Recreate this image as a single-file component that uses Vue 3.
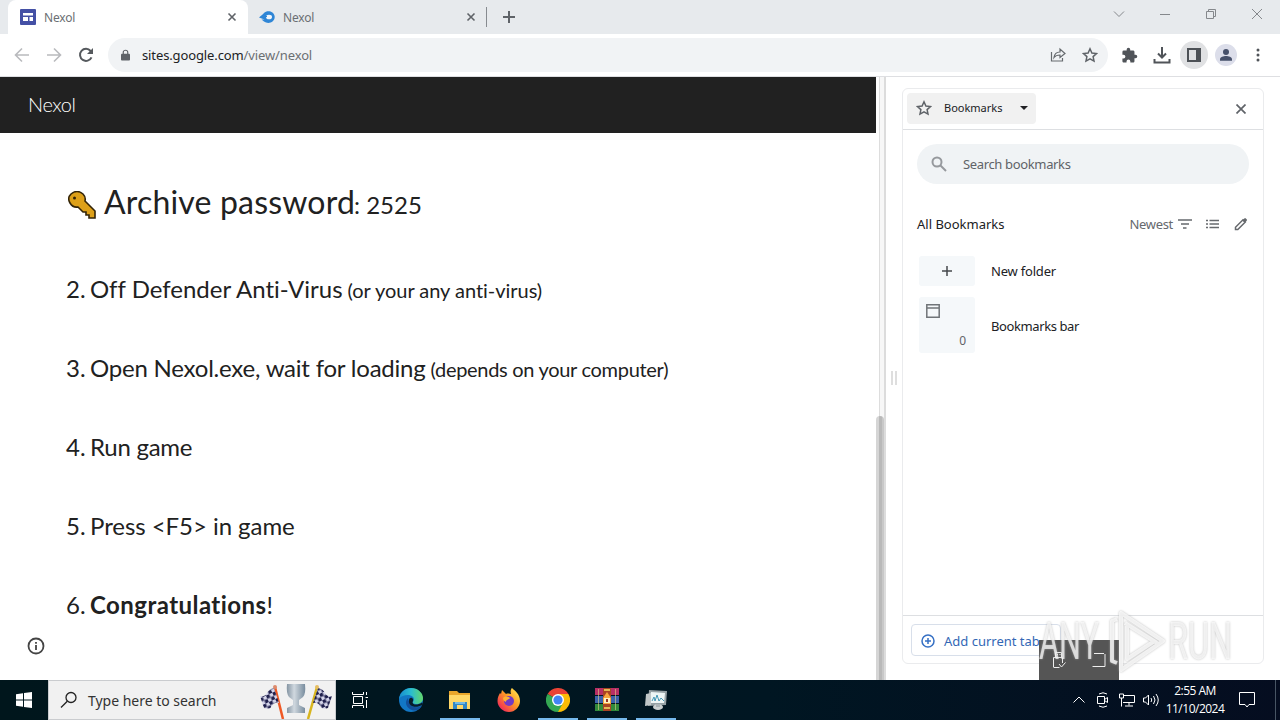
<template>
  <div class="desktop">
    <div class="tab-strip">
      <div class="tab active">
        <svg class="favicon" viewBox="0 0 16 16">
          <rect width="16" height="16" rx="1" fill="#4450a5" />
          <path d="M3 4h10v2.500H3zM3 8h5v4H3zM9.500 8H13v4H9.500z" fill="#fff" />
        </svg>
        <span class="tab-title">Nexol</span>
        <svg class="tab-close" viewBox="0 0 10 10"><path d="M1.500 1.500l7 7M8.500 1.500l-7 7" /></svg>
      </div>
      <div class="tab">
        <svg class="favicon" viewBox="0 0 16 16">
          <path d="M0 8.500C2 6.500 3.500 6 5 4c3-3 10-2 10.700 3.500C16 13.500 9 15.500 5 12.500L2.500 10.500h3L0 8.500z" fill="#2f86d6" />
          <ellipse cx="10" cy="8" rx="3" ry="2.300" fill="#f2f6fa" />
          <path d="M3 7.500h5" stroke="#2f86d6" stroke-width="1.200" />
        </svg>
        <span class="tab-title">Nexol</span>
        <svg class="tab-close" viewBox="0 0 10 10"><path d="M1.500 1.500l7 7M8.500 1.500l-7 7" /></svg>
      </div>
      <span class="tab-divider"></span>
      <svg class="new-tab" viewBox="0 0 12 12"><path d="M6 0v12M0 6h12" /></svg>
      <div class="window-buttons">
        <svg viewBox="0 0 12 12"><path d="M1 3.500l5 5 5-5" /></svg>
        <svg viewBox="0 0 12 12"><path d="M1 6.500h10" /></svg>
        <svg viewBox="0 0 12 12"><path d="M1.500 3.500h7v7h-7zM3.500 3.500v-2h7v7h-2" /></svg>
        <svg viewBox="0 0 12 12"><path d="M1 1l10 10M11 1L1 11" /></svg>
      </div>
    </div>

    <div class="toolbar">
      <div class="nav-buttons">
        <svg class="off" viewBox="0 0 16 16"><path d="M15 8H2M8 1.500L1.500 8 8 14.500" /></svg>
        <svg class="off" viewBox="0 0 16 16"><path d="M1 8h13M8 1.500L14.500 8 8 14.500" /></svg>
        <svg viewBox="0 0 16 16"><path d="M13.500 10.300A6 6 0 1 1 12.600 4L14 5.500" /><path d="M15 1v6H9z" class="solid" /></svg>
      </div>
      <div class="address">
        <svg class="lock" viewBox="0 0 10 12">
          <path d="M1 4.500h8q1 0 1 1V11q0 1-1 1H1q-1 0-1-1V5.500q0-1 1-1z" fill="#5f6368" />
          <path d="M2.500 5V3a2.500 2.300 0 0 1 5 0v2" fill="none" stroke="#5f6368" stroke-width="1.300" />
        </svg>
        <span class="url"><span class="host">sites.google.com</span><span class="path">/view/nexol</span></span>
        <svg class="share" viewBox="0 0 16 16"><path d="M1.500 5v9h11v-3M4 10.500c.5-4 3-5.500 6-5.500V2l5 4.500-5 4V8C7.500 8 5.500 8.500 4 10.500z" /></svg>
        <svg class="star" viewBox="0 0 16 16"><path :d="starPath" /></svg>
      </div>
      <div class="actions">
        <svg viewBox="0 0 24 24" class="puzzle"><path :d="puzzlePath" /></svg>
        <svg viewBox="0 0 18 18" class="line"><path d="M9 1v10M5 7.500L9 11.500l4-4M1.500 13v3.500h15V13" /></svg>
        <span class="round panel-toggle">
          <svg viewBox="0 0 14 14"><path d="M0 0h14v14H0zM2 2v10h7V2z" fill="#4d5156" fill-rule="evenodd" /></svg>
        </span>
        <span class="round profile">
          <svg viewBox="0 0 14 14"><circle cx="7" cy="4" r="3" /><path d="M1 12.800v-1.600C1 9 4.500 8 7 8s6 1 6 3.200v1.600z" /></svg>
        </span>
        <svg viewBox="0 0 4 14" class="kebab"><circle cx="2" cy="2" r="1.500" /><circle cx="2" cy="7" r="1.500" /><circle cx="2" cy="12" r="1.500" /></svg>
      </div>
    </div>

    <div class="browser-body">
      <main class="page">
        <header class="site-header">Nexol</header>
        <div class="site-content">
          <h1>
            <svg class="key" viewBox="0 0 28 28">
              <path d="M3 3q6-5 12 0q3 3 2 7l10 10v7h-6v-3h-3v-3h-3l-5-5Q5 17 2 12Q-1 7 3 3z" />
              <circle cx="6.500" cy="7" r="1.500" class="hole" />
            </svg>
            <span class="label">Archive password</span><span class="code">: 2525</span>
          </h1>
          <p v-for="step in steps" :key="step.number">
            <span class="number">{{ step.number }}.</span>
            <span :class="step.style"><b v-if="step.bold">{{ step.bold }}</b>{{ step.text }}</span>
            <small v-if="step.note" :class="step.style">{{ step.note }}</small>
          </p>
        </div>
        <svg class="info" viewBox="0 0 18 18"><circle cx="9" cy="9" r="7.500" /><path d="M9 8v5M9 5v1.800" /></svg>
      </main>
      <div class="scrollbar"><div class="thumb"></div></div>
      <div class="splitter"><i></i><i></i></div>

      <aside class="side-panel">
        <div class="panel-head">
          <div class="picker">
            <svg class="star" viewBox="0 0 16 16"><path :d="starPath" /></svg>
            <span>Bookmarks</span>
            <i class="caret"></i>
          </div>
          <svg class="panel-close" viewBox="0 0 10 10"><path d="M.5 .5l9 9M9.500 .5l-9 9" /></svg>
        </div>
        <div class="panel-list">
          <div class="search">
            <svg viewBox="0 0 16 16"><circle cx="6" cy="6" r="4.500" /><path d="M9.500 9.500l5.500 5.500" /></svg>
            <span>Search bookmarks</span>
          </div>
          <div class="list-head">
            <span class="all">All Bookmarks</span>
            <span class="newest">Newest</span>
            <svg class="sort" viewBox="0 0 14 12"><path d="M0 2h14M3 6h8M5 10h3.500" /></svg>
            <svg class="rows" viewBox="0 0 14 12"><path d="M0 2.500h2M3.500 2.500H13M0 6h2M3.500 6H13M0 9.500h2M3.500 9.500H13" /></svg>
            <svg class="pencil" viewBox="0 0 14 14"><path d="M1.500 12.500v-2.300L9 2.700l2.300 2.300-7.500 7.500z" /><path d="M8.300 3.400l2-2q.8-.6 1.500 0l.9.900q.6.700 0 1.400l-2 2z" class="solid" /></svg>
          </div>
          <div class="row">
            <div class="tile small"><svg viewBox="0 0 10 10"><path d="M5 0v10M0 5h10" /></svg></div>
            <span class="new-folder">New folder</span>
          </div>
          <div class="row">
            <div class="tile">
              <svg viewBox="0 0 14 14"><path d="M.8 .8h12.400v12.400H.8zM.8 4h12.400" /></svg>
              <span class="count">0</span>
            </div>
            <span class="bar-name">Bookmarks bar</span>
          </div>
        </div>
        <div class="panel-foot">
          <div class="add-tab">
            <svg viewBox="0 0 14 14"><circle cx="7" cy="7" r="6" /><path d="M7 4v6M4 7h6" /></svg>
            <span>Add current tab</span>
          </div>
        </div>
      </aside>

      <div class="tray-popup">
        <svg class="usb" viewBox="0 0 14 18"><path d="M3.500 6V1.500h6V6M1.500 16V6.500h9V12M1.500 16.500h6M7 13l2.500 3 4-4.500M5 3.500h1M7.500 3.500h1" /></svg>
        <svg class="box" viewBox="0 0 14 14"><path d="M2 .5h10M.5 13.500h12.500V1" /></svg>
      </div>
      <svg class="watermark" viewBox="0 0 200 70">
        <g class="letters">
          <text x="2" y="51" textLength="60" lengthAdjust="spacingAndGlyphs">ANY</text>
          <text x="131" y="51" textLength="64" lengthAdjust="spacingAndGlyphs">RUN</text>
        </g>
        <path class="play" d="M84 5v57l42-29zM88 15l32 20M90 18v33l26-17M80 11l-5 2v40l5 2" />
      </svg>
    </div>

    <footer class="taskbar">
      <div class="start"><svg viewBox="0 0 16 16"><path d="M0 2.300l7-1v6.200H0zM8 1.100L16 0v7.500H8zM0 8.500h7v6.200l-7-1zM8 8.500h8V16l-8-1.100z" /></svg></div>
      <div class="task-search">
        <svg class="glass" viewBox="0 0 18 18"><circle cx="11" cy="6.500" r="5" /><path d="M7.300 10.200L1 16.500" /></svg>
        <span>Type here to search</span>
        <svg class="trophy" viewBox="0 0 72 36">
          <defs>
            <linearGradient id="silver"><stop stop-color="#8494a2" /><stop offset=".4" stop-color="#d0d8df" /><stop offset="1" stop-color="#788c9d" /></linearGradient>
            <pattern id="checks" width="7" height="7" patternUnits="userSpaceOnUse" patternTransform="rotate(-25)">
              <rect width="7" height="7" fill="#d5d5ea" /><path d="M0 0h3.500v3.500H0zM3.500 3.500H7V7H3.500z" fill="#20204d" />
            </pattern>
          </defs>
          <path d="M15 4l8 32" stroke="#ef5824" stroke-width="2.500" />
          <path d="M57 4l-9 32" stroke="#d8b51e" stroke-width="2.500" />
          <path d="M14 5l5 15q-5-1-7 3t-8 2L0 13q5 1 7-3t7-5z" fill="url(#checks)" />
          <path d="M58 5l-5 15q5-1 7 3t8 2l4-12q-5 1-7-3t-7-5z" fill="url(#checks)" />
          <circle cx="15" cy="4" r="2" fill="#dc8b6d" /><circle cx="57" cy="4" r="2" fill="#e6bd62" />
          <path d="M27 1h18q1 10-2 13l-4 3v5l6 3v5H27v-5l6-3v-5l-4-3q-3-4-2-13z" fill="url(#silver)" />
        </svg>
      </div>
      <div class="apps">
        <div class="app task-view"><svg viewBox="0 0 18 16"><path d="M2.500 4.500h9v7h-9zM1.500 0v2.500h11V0M1.500 16v-2.500h11V16M15.500 0v3M15.500 8v8M14.500 5.500h2.500" /></svg></div>
        <div class="app">
          <svg viewBox="0 0 24 24">
            <defs><linearGradient id="edge-top"><stop stop-color="#168bd0" /><stop offset=".5" stop-color="#2abdd0" /><stop offset="1" stop-color="#63d76b" /></linearGradient></defs>
            <circle cx="12" cy="12" r="12" fill="#1277c5" />
            <path d="M0 11C1 4 6 0 12 0c7 0 12 5 12 10 0 4-3 6-7 6-2 0-4-1-3-2 3-5-2-7-5-7-4 0-7 1-9 4z" fill="url(#edge-top)" />
            <path d="M9 10c-5 5 0 13 8 12.500 3-.5 4.500-2.500 6-5-6 4-13 1-14-7.500z" fill="#12509b" />
            <path d="M13 10c2 1 1 3 .5 4.500.5 2.500 5 3 9.500 0l1 2c-8 5-15 1-14-4 0-2 1-3 3-2.500z" fill="#081d2a" />
          </svg>
        </div>
        <div class="app open">
          <svg viewBox="0 0 24 24">
            <path d="M1 3h8l2 2h11v15H1z" fill="#e9a62b" /><path d="M2 7h20v14H1V7z" fill="#ffd767" />
            <path d="M5 14h14v7h-4v-4H9v4H5z" fill="#3287c6" /><path d="M7 14h10v2H7z" fill="#72b9e3" />
          </svg>
        </div>
        <div class="app">
          <svg viewBox="0 0 24 24">
            <defs><linearGradient id="fox" x1="1" y1="0" x2="0" y2="1"><stop stop-color="#fff45b" /><stop offset=".45" stop-color="#ff9a24" /><stop offset=".8" stop-color="#f33d4f" /><stop offset="1" stop-color="#dc1678" /></linearGradient></defs>
            <path d="M3 5l1 1 1-4 4 4c2-1 4 0 5 0-1-3 0-5 1-6 3 3 8 6 8 13 0 6-5 11-11 11S.5 19 .5 13C.5 9 2 7 3 5z" fill="url(#fox)" />
            <circle cx="12" cy="13" r="5" fill="#723ac5" /><path d="M6 10c3-3 6-1 7 0-1 2-4 1-4 4-2-1-3-2-3-4z" fill="#ffb133" />
          </svg>
        </div>
        <div class="app open">
          <svg viewBox="0 0 24 24">
            <path d="M12 12L1.600 6a12 12 0 0 1 20.800 0z" fill="#ea4335" /><path d="M12 12V6h10.400A12 12 0 0 1 12 24z" fill="#fbbc05" />
            <path d="M12 12l5 3-5 9A12 12 0 0 1 1.600 6z" fill="#34a853" /><circle cx="12" cy="12" r="6" fill="#fff" /><circle cx="12" cy="12" r="4.600" fill="#4285f4" />
          </svg>
        </div>
        <div class="app open">
          <svg viewBox="0 0 24 24">
            <path d="M0 0h24v7H0z" fill="#b72f65" /><path d="M0 8h24v7H0z" fill="#3c62ab" /><path d="M0 16h24v7H0z" fill="#328a3b" />
            <path d="M3.500 1v21M20.500 1v21" stroke="#ded088" stroke-opacity=".6" /><path d="M8 0h8v23H8z" fill="#a94424" />
            <path d="M9 2h6M9 20h6" stroke="#e3b957" stroke-width="2" /><path d="M8 10l4-6 4 6v6H8z" fill="#f7a73d" /><path d="M9 10h6v5H9z" fill="#fff2c3" /><path d="M12 11v3" stroke="#9a3625" stroke-width="2" />
          </svg>
        </div>
        <div class="app open">
          <svg viewBox="0 0 24 24">
            <path d="M5 2l18 1-1 14-18 1z" fill="#96a1a5" /><path d="M7 4l14 1-1 10H6z" fill="#edf5f5" /><path d="M8 13l2-4 1 4 2-6 2 6 2-3 3 3" fill="none" stroke="#4497b6" />
            <path d="M2 6l5-1v12l-6 1z" fill="#c0c7c8" /><ellipse cx="14" cy="19" rx="5" ry="3" fill="#cbd0d1" /><path d="M12 16h4v3h-4z" fill="#aab2b5" />
          </svg>
        </div>
      </div>
      <div class="tray">
        <svg class="chevron" viewBox="0 0 12 12"><path d="M.5 8.500L6 3l5.500 5.500" /></svg>
        <svg class="meet" viewBox="0 0 12 16"><path d="M.5 4.500h7v7h-7zM7.500 7.500l3-2v5l-3-2M2 2q4-2.500 8 0M2 14q4 2.500 8 0" /></svg>
        <svg class="network" viewBox="0 0 16 14"><path d="M5 2.500h10.500v7H4M.5 1h4v4h-4zM2.500 5v8.500M10 9.500v3M6 13h8" /></svg>
        <svg class="volume" viewBox="0 0 16 14"><path d="M.5 5h2l3-3v10l-3-3h-2zM8 5q1.500 2 0 4M10.500 3q3 4 0 8M13 1q4.500 6 0 12" /></svg>
        <div class="clock"><span class="time">2:55 AM</span><span class="date">11/10/2024</span></div>
        <svg class="notice" viewBox="0 0 16 16"><path d="M.5 .5h15v12H10L8 15l-2-2.500H.5z" /></svg>
        <span class="peek"></span>
      </div>
    </footer>
  </div>
</template>

<script setup>
const steps = [
  { number: 2, text: 'Off Defender Anti-Virus', note: '(or your any anti-virus)', style: 'step-two' },
  { number: 3, text: 'Open Nexol.exe, wait for loading', note: '(depends on your computer)', style: 'step-three' },
  { number: 4, text: 'Run game', style: 'step-four' },
  { number: 5, text: 'Press <F5> in game', style: 'step-five' },
  { number: 6, bold: 'Congratulations', text: '!', style: 'step-last' },
]

const starPath = 'M8 1.800l1.900 4.200 4.600.5-3.400 3.100.9 4.500L8 11.800 4 14.100l.9-4.500L1.500 6.500 6.100 6z'
const puzzlePath = 'M20.500 11H19V7c0-1.100-.9-2-2-2h-4V3.500a2.500 2.500 0 0 0-5 0V5H4a2 2 0 0 0-2 2v3.800h1.500a2.700 2.700 0 0 1 0 5.400H2V20c0 1.100.9 2 2 2h3.800v-1.500a2.700 2.700 0 0 1 5.400 0V22H17c1.100 0 2-.9 2-2v-4h1.500a2.500 2.500 0 0 0 0-5z'
</script>

<style>
body {
  background: #fff;
}
</style>

<style scoped>
* {
  box-sizing: border-box;
}

svg {
  display: block;
  flex: none;
  fill: none;
  stroke-width: 1;
}

.desktop {
  width: 1280px;
  height: 720px;
  overflow: hidden;
  background: #fff;
  font-family: "Noto Sans", "Open Sans", sans-serif;
  font-size: 12.5px;
  color: #202124;
}

.tab-strip {
  height: 34px;
  display: flex;
  align-items: center;
  padding-left: 8px;
  background: #e7eaed;
}

.tab {
  width: 240px;
  height: 34px;
  display: flex;
  align-items: center;
  padding: 0 11px 0 12px;
}

.tab.active {
  background: #fff;
  border-radius: 8px 8px 0 0;
}

.tab:not(.active) {
  width: 238px;
  padding-right: 10px;
  padding-left: 11px;
}

.favicon {
  width: 16px;
  height: 16px;
}

.tab-title {
  flex: 1;
  margin-left: 8px;
  font-size: 12px;
  letter-spacing: -0.2px;
  color: #6b6f73;
}

.tab-close {
  width: 10px;
  height: 10px;
  stroke: #5f6368;
  stroke-width: 1.6;
}

.tab-divider {
  width: 1px;
  height: 20px;
  background: #878b90;
}

.new-tab {
  width: 12px;
  height: 12px;
  margin-left: 16px;
  stroke: #5f6368;
  stroke-width: 2;
}

.window-buttons {
  display: flex;
  gap: 34px;
  margin-left: auto;
  padding: 0 17px 6px 0;
  stroke: #85888c;
}

.window-buttons svg {
  width: 12px;
  height: 12px;
}

.toolbar {
  height: 43px;
  display: flex;
  align-items: center;
  border-bottom: 1px solid #dedfe2;
}

.nav-buttons {
  width: 108px;
  display: flex;
  gap: 16px;
  padding-left: 14px;
}

.nav-buttons svg {
  width: 16px;
  height: 16px;
  stroke: #55595d;
  stroke-width: 2;
}

.nav-buttons svg.off {
  stroke: #b9babd;
  stroke-width: 1.6;
}

.nav-buttons .solid {
  fill: #55595d;
  stroke: none;
}

.address {
  width: 1000px;
  height: 34px;
  display: flex;
  align-items: center;
  padding: 0 10px 0 13px;
  border-radius: 17px;
  background: #f1f3f5;
}

.lock {
  width: 9px;
  height: 12px;
}

.url {
  flex: 1;
  margin-left: 12px;
  font-size: 13px;
  letter-spacing: -0.12px;
}

.path {
  color: #6b6f73;
}

.share {
  width: 16px;
  height: 16px;
  margin-right: 16px;
  stroke: #666a6e;
  stroke-width: 1.2;
}

.star {
  width: 16px;
  height: 16px;
  stroke: #5f6368;
  stroke-width: 1.5;
}

.actions {
  display: flex;
  align-items: center;
  padding-left: 13px;
}

.puzzle {
  width: 17px;
  height: 17px;
  fill: #505459;
}

.line {
  width: 18px;
  height: 18px;
  margin: 0 9px 0 15px;
  stroke: #505459;
  stroke-width: 2;
}

.round {
  width: 28px;
  height: 28px;
  display: grid;
  place-items: center;
  border-radius: 50%;
  background: #e0e1e3;
}

.round svg {
  width: 14px;
  height: 14px;
}

.profile {
  width: 22px;
  height: 22px;
  margin: 0 19px 0 7px;
  background: #dcdeea;
}

.profile svg { fill: #46506a; }

.kebab {
  width: 4px;
  height: 14px;
  fill: #505459;
}

.browser-body {
  position: relative;
  height: 603px;
  display: flex;
}

.page {
  width: 876px;
  display: flex;
  flex-direction: column;
  font-family: Lato, sans-serif;
  font-variant-ligatures: none;
  color: #212121;
}

.site-header {
  height: 56px;
  padding-left: 28px;
  line-height: 55px;
  font-size: 20px;
  font-weight: 300;
  letter-spacing: -0.4px;
  color: #fff;
  background: #212121;
}

.site-content {
  height: 504px;
  padding: 47px 0 0 66px;
}

h1 {
  height: 45px;
  display: flex;
  align-items: baseline;
  margin: 0 0 41px;
  font-size: 32px;
  line-height: 44px;
  font-weight: 400;
}

.key {
  width: 28px;
  height: 28px;
  margin: 5px 8px 0 2px;
  align-self: center;
  fill: #dda019;
  stroke: #332408;
  stroke-width: 1.6;
}

.hole {
  fill: #332408;
  stroke: none;
}

.label {
  width: 250px;
  white-space: nowrap;
  letter-spacing: 0.18px;
}

.code {
  font-size: 24px;
}

p {
  height: 31px;
  margin: 0 0 48px;
  display: flex;
  align-items: baseline;
  gap: 5px;
  white-space: nowrap;
  font-size: 24px;
  line-height: 46px;
}

.number {
  width: 19px;
}

.step-two { letter-spacing: 0; }
.step-three { letter-spacing: -0.22px; }
.step-four { letter-spacing: -0.25px; }
.step-five { letter-spacing: -0.05px; }
.step-last { letter-spacing: 0.45px; }

small {
  font-size: 20px;
}

small.step-two { letter-spacing: -0.03px; }
small.step-three { letter-spacing: -0.3px; }

.info {
  width: 18px;
  height: 18px;
  margin-left: 27px;
  stroke: #444;
  stroke-width: 1.8;
}

.scrollbar {
  width: 10px;
  padding-top: 339px;
  border-right: 2px solid #dcdcdc;
  background: linear-gradient(90deg, #fff 3px, #ddd 3px 4px, #f7f7f7 4px);
}

.thumb {
  width: 8px;
  height: 264px;
  border-radius: 4px 4px 0 0;
  background: linear-gradient(90deg, #d5d5d5 3px, #b9b9b9 3px 6px, #c8c8c8 6px);
}

.splitter {
  width: 16px;
  display: flex;
  justify-content: center;
  gap: 2px;
  padding-top: 294px;
}

.splitter i {
  width: 2px;
  height: 14px;
  background: #dedede;
}

.side-panel {
  width: 362px;
  height: 576px;
  display: flex;
  flex-direction: column;
  margin-top: 11px;
  border: 1px solid #eaebed;
  border-radius: 6px;
}

.panel-head {
  height: 41px;
  display: flex;
  align-items: center;
  justify-content: space-between;
  padding: 0 17px 2px 4px;
  border-bottom: 1px solid #dddfe2;
}

.picker {
  width: 129px;
  height: 31px;
  display: flex;
  align-items: center;
  padding-left: 9px;
  border-radius: 4px;
  background: #f1f1f1;
  font-size: 11px;
}

.picker span {
  width: 60px;
  margin: -2px 16px 0 12px;
}

.caret {
  border: 4px solid transparent;
  border-top-color: #202124;
  border-bottom: 0;
}

.panel-close {
  width: 10px;
  height: 10px;
  margin-top: 2px;
  stroke: #5f6368;
  stroke-width: 1.7;
}

.panel-list {
  flex: 1;
  padding: 14px 14px 0;
}

.search {
  height: 40px;
  display: flex;
  align-items: center;
  gap: 16px;
  padding-left: 14px;
  border-radius: 20px;
  background: #f0f3f5;
  font-size: 13px;
  letter-spacing: -0.35px;
  color: #5f6368;
}

.search svg {
  width: 16px;
  height: 16px;
  stroke: #96999d;
  stroke-width: 2;
}

.list-head {
  height: 40px;
  display: flex;
  align-items: center;
  margin: 20px 1px 12px 0;
  font-size: 13px;
}

.newest {
  margin: 0 5px 0 auto;
  letter-spacing: -0.3px;
  color: #66696d;
}

.sort, .rows, .pencil {
  width: 14px;
  height: 12px;
  stroke: #66696d;
  stroke-width: 1.5;
}

.rows { margin: 0 14px; }
.pencil { height: 14px; }
.pencil .solid { fill: #66696d; stroke: none; }

.row {
  display: flex;
  align-items: center;
  gap: 16px;
  margin: 0 0 11px 2px;
  font-size: 13px;
}

.new-folder { letter-spacing: -0.2px; }

.bar-name {
  padding-top: 2px;
  letter-spacing: -0.4px;
}

.tile {
  width: 56px;
  height: 56px;
  display: flex;
  flex-direction: column;
  justify-content: space-between;
  padding: 7px 9px 4px 7px;
  border-radius: 3px;
  background: #f5f8fa;
}

.tile svg {
  width: 14px;
  height: 14px;
  stroke: #707478;
  stroke-width: 1.5;
}

.tile.small {
  height: 30px;
  align-items: center;
  justify-content: center;
  padding: 0;
}

.tile.small svg {
  width: 10px;
  height: 10px;
  stroke: #45484c;
}

.count {
  align-self: flex-end;
  font-size: 12px;
  color: #5f6368;
}

.panel-foot {
  height: 48px;
  padding: 8px;
  border-top: 1px solid #dddfe2;
}

.add-tab {
  width: 150px;
  height: 32px;
  display: flex;
  align-items: center;
  padding-top: 1px;
  padding-left: 9px;
  border: 1px solid #d8dfea;
  border-radius: 4px;
  white-space: nowrap;
  font-size: 13px;
  color: #3267b5;
}

.add-tab svg {
  width: 14px;
  height: 14px;
  margin-right: 9px;
  stroke: #3670c4;
  stroke-width: 1.5;
}

.tray-popup {
  position: absolute;
  left: 1039px;
  top: 563px;
  width: 80px;
  height: 40px;
  display: flex;
  align-items: center;
  justify-content: space-between;
  padding: 0 13px;
  background: #555;
  stroke: #eee;
}

.usb { width: 14px; height: 18px; }
.box { width: 14px; height: 14px; }

/* semi-transparent overlay above the panel and the tray popup */
.watermark {
  position: absolute;
  left: 1037px;
  top: 531px;
  width: 200px;
  height: 70px;
  overflow: visible;
  filter: drop-shadow(0 0 1px #aaa);
}

.letters {
  fill: #fff;
  fill-opacity: 0.7;
  font-family: Roboto, sans-serif;
  font-size: 51px;
}

.play {
  stroke: #fff;
  stroke-width: 4;
  stroke-opacity: 0.75;
  stroke-linejoin: round;
}

.taskbar {
  height: 40px;
  display: flex;
  align-items: center;
  background: linear-gradient(90deg, #00161c, #001622 60%, #050d20);
  color: #fff;
}

.start {
  width: 48px;
  display: grid;
  place-items: center;
}

.start svg {
  width: 16px;
  height: 16px;
  fill: #fff;
}

.task-search {
  width: 288px;
  height: 40px;
  display: flex;
  align-items: center;
  padding: 0 3px 0 11px;
  border: 1px solid #cacccf;
  background: #f1f1f1;
  color: #333;
  font-size: 14px;
}

.task-search span {
  width: 129px;
  margin: 0 43px 0 10px;
  white-space: nowrap;
  letter-spacing: -0.02px;
}

.glass {
  width: 18px;
  height: 18px;
  stroke: #222;
  stroke-width: 1.3;
}

.trophy {
  width: 72px;
  height: 36px;
  align-self: flex-end;
}

.apps {
  display: flex;
}

.app {
  width: 49px;
  height: 40px;
  display: grid;
  place-items: center;
}

.app:not(.task-view) {
  padding-left: 2px;
}

.app svg {
  width: 24px;
  height: 24px;
}

.app.open {
  background: linear-gradient(#76b9ed, #76b9ed) 6px bottom / 40px 2px no-repeat;
}

.task-view {
  padding-right: 2px;
}

.task-view svg {
  width: 18px;
  height: 16px;
  stroke: #fff;
}

.tray {
  height: 40px;
  display: flex;
  align-items: center;
  margin-left: auto;
  stroke: #fff;
}

.chevron { width: 12px; height: 12px; margin-right: 12px; }
.meet { width: 12px; height: 16px; margin-right: 10px; }
.network { width: 16px; height: 14px; margin-right: 8px; }
.volume { width: 16px; height: 14px; }

.clock {
  width: 72px;
  display: flex;
  flex-direction: column;
  align-items: center;
  font-family: "Open Sans", sans-serif;
  font-size: 12px;
  line-height: 18px;
  letter-spacing: -0.5px;
  stroke: none;
}

.notice {
  width: 16px;
  height: 16px;
  margin: 0 20px 0 8px;
}

.peek {
  width: 5px;
  height: 40px;
  border-left: 1px solid #485564;
}
</style>
